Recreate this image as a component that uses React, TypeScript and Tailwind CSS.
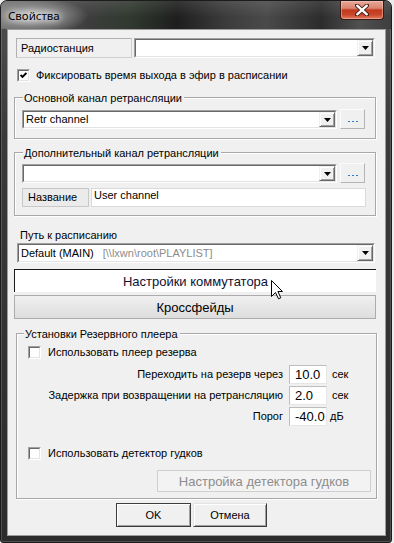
import React from "react";

function DropBtn() {
  return (
    <div className="w-[16px] h-full shrink-0 flex items-center justify-center bg-[#f0f0f0] border border-t-[#f0f0f0] border-l-[#f0f0f0] border-r-[#696969] border-b-[#696969] shadow-[inset_1px_1px_0_#fff,inset_-1px_-1px_0_#a0a0a0]">
      <svg width="7" height="4" viewBox="0 0 7 4">
        <path d="M0 0H7L3.5 4Z" fill="#000" />
      </svg>
    </div>
  );
}

function Combo({ className, children }: { className: string; children?: React.ReactNode }) {
  return (
    <div className={"flex bg-white border border-t-[#a0a0a0] border-l-[#a0a0a0] border-r-white border-b-white " + className}>
      <div className="flex-1 min-w-0 flex border border-t-[#696969] border-l-[#696969] border-r-[#e3e3e3] border-b-[#e3e3e3]">
        <div className="flex-1 min-w-0 flex items-center pl-[2px] whitespace-nowrap overflow-hidden">{children}</div>
        <DropBtn />
      </div>
    </div>
  );
}

function DotsBtn() {
  return (
    <div className="w-[25px] h-[20px] ml-[3px] shrink-0 flex items-end justify-center gap-[2px] pb-[6px] bg-[#f0f0f0] border border-t-[#fbfbfb] border-l-[#fbfbfb] border-r-[#b4b4b4] border-b-[#b4b4b4]">
      <div className="w-[2px] h-[1px] bg-[#2f78d8]" />
      <div className="w-[2px] h-[1px] bg-[#2f78d8]" />
      <div className="w-[2px] h-[1px] bg-[#2f78d8]" />
    </div>
  );
}

function Check({ checked }: { checked?: boolean }) {
  return (
    <div className="w-[13px] h-[13px] shrink-0 bg-white border border-t-[#a0a0a0] border-l-[#a0a0a0] border-r-white border-b-white">
      <div className="w-full h-full border border-t-[#696969] border-l-[#696969] border-r-[#e3e3e3] border-b-[#e3e3e3] flex items-center justify-center">
        {checked && (
          <svg width="7" height="7" viewBox="0 0 7 7">
            <polyline points="0.6,3 2.5,5 6.4,1" fill="none" stroke="#000" strokeWidth="1.9" />
          </svg>
        )}
      </div>
    </div>
  );
}

function Group({
  title,
  className,
  labelClass,
  children,
}: {
  title: string;
  className: string;
  labelClass: string;
  children?: React.ReactNode;
}) {
  return (
    <div className={"relative border border-[#a8a8a8] shadow-[inset_1px_1px_0_#fff,1px_1px_0_#fff] " + className}>
      <span className={"absolute top-[-6px] bg-[#f0f0f0] pl-[1px] pr-[2px] whitespace-nowrap " + labelClass}>{title}</span>
      {children}
    </div>
  );
}

function ValueRow({ label, value, unit, unitClass, className }: { label: string; value: string; unit: string; unitClass: string; className: string }) {
  return (
    <div className={"flex items-center h-[19px] " + className}>
      <div className="w-[255px] text-right whitespace-nowrap">{label}</div>
      <div className="ml-[6px] w-[38px] h-[19px] bg-white border border-t-[#bdbdbd] border-l-[#bdbdbd] border-r-[#e6e6e6] border-b-[#e6e6e6] flex items-center pl-[5px] text-[13px] leading-[15px]">
        {value}
      </div>
      <div className={unitClass}>{unit}</div>
    </div>
  );
}

function CloseBtn() {
  return (
    <div className="mr-[7px] w-[44px] h-[19px] rounded-b-[4px] border border-t-0 border-[#3a1a14] bg-[linear-gradient(180deg,#e9a898_0%,#d98570_40%,#c2391e_50%,#c9452a_75%,#e27a5c_100%)] shadow-[inset_0_0_0_1px_rgba(255,210,200,0.45)] flex items-center justify-center">
      <svg width="14" height="12" viewBox="0 0 14 12">
        <path d="M2 1.5L12 10.5M12 1.5L2 10.5" stroke="#4a1f18" strokeWidth="4.2" strokeLinecap="round" />
        <path d="M2.2 1.7L11.8 10.3M11.8 1.7L2.2 10.3" stroke="#fff" strokeWidth="2.4" strokeLinecap="round" />
      </svg>
    </div>
  );
}

function Cursor() {
  return (
    <svg className="absolute left-[271px] top-[280px]" width="13" height="20" viewBox="0 0 13 20">
      <path d="M0.5 0.5V16.5L4.5 12.5L7.5 18.8L9.8 17.8L6.9 11.5H11.5Z" fill="#fff" stroke="#000" strokeWidth="1" strokeLinejoin="miter" />
    </svg>
  );
}

export default function App() {
  return (
    <div className="w-[394px] h-[543px] bg-[#ececec] relative overflow-hidden font-['Liberation_Sans',Arial,sans-serif] text-black">
      <div className="w-[392px] h-[543px] rounded-t-[7px] rounded-b-[3px] border border-[#1c1c1c] bg-[linear-gradient(180deg,#505050_0%,#3a3a3a_25%,#2c2c2c_100%)] shadow-[inset_0_0_0_1px_rgba(255,255,255,0.16)] flex flex-col">
        {/* Title bar */}
        <div className="h-[28px] shrink-0 flex justify-between rounded-t-[6px] bg-[radial-gradient(ellipse_55px_18px_at_33px_15px,rgba(225,225,225,0.85),rgba(170,170,170,0.45)_60%,transparent_100%),linear-gradient(180deg,rgba(255,255,255,0.10),transparent_60%),linear-gradient(90deg,#6e6e6e_0%,#555_10%,#3d3d3d_22%,#30392f_33%,#1e1e1e_45%,#3c3c3c_58%,#4a4a4a_68%,#2c2c2c_82%,#505050_92%,#3e3e3e_100%)]">
          <div className="pl-[7px] pt-[7px] text-[11.5px] leading-[16px] font-['Noto_Sans',Arial,sans-serif] text-black [text-shadow:0_0_6px_rgba(255,255,255,0.9),0_0_10px_rgba(255,255,255,0.7)]">
            Свойства
          </div>
          <CloseBtn />
        </div>

        {/* Client */}
        <div className="ml-[6px] w-[379px] h-[507px] border border-[#9c9c9c] bg-[#f0f0f0] flex flex-col text-[11px] leading-[13px]">
          {/* Радиостанция */}
          <div className="mt-[8px] ml-[8px] flex h-[20px]">
            <div className="w-[116px] h-full border border-[#b0b0b0] border-r-[#d0d0d0] border-b-[#d0d0d0] flex items-center pl-[4px]">Радиостанция</div>
            <Combo className="ml-[2px] w-[241px] h-full" />
          </div>

          {/* checkbox */}
          <div className="mt-[11px] ml-[9px] flex items-center h-[13px] gap-[6px]">
            <Check checked />
            <span className="whitespace-nowrap">Фиксировать время выхода в эфир в расписании</span>
          </div>

          {/* Group 1 */}
          <Group title="Основной канал ретрансляции" className="mt-[15px] ml-[6px] w-[362px] h-[42px] pt-[11px] pl-[7px]" labelClass="left-[8px]">
            <div className="flex items-start">
              <Combo className="mt-[1px] w-[315px] h-[19px]">Retr channel</Combo>
              <DotsBtn />
            </div>
          </Group>

          {/* Group 2 */}
          <Group title="Дополнительный канал ретрансляции" className="mt-[13px] ml-[6px] w-[362px] h-[64px] pt-[10px] pl-[7px]" labelClass="left-[8px]">
            <div className="flex items-start">
              <Combo className="mt-[1px] w-[315px] h-[19px]" />
              <DotsBtn />
            </div>
            <div className="mt-[5px] flex h-[19px]">
              <div className="w-[67px] h-full bg-[#ebebeb] border border-[#c8c8c8] flex items-center pl-[5px]">Название</div>
              <div className="ml-[2px] w-[275px] h-full bg-white border border-[#dadada] pl-[2px]">User channel</div>
            </div>
          </Group>

          {/* Path */}
          <div className="mt-[13px] ml-[12px] whitespace-nowrap">Путь к расписанию</div>
          <Combo className="mt-[1px] ml-[9px] w-[358px] h-[20px]">
            <span>Default (MAIN)</span>
            <span className="ml-[9px] text-[#8c8c8c]">[\\lxwn\root\PLAYLIST]</span>
          </Combo>

          {/* Buttons */}
          <div className="mt-[6px] ml-[6px] w-[362px] h-[23px] bg-white border-t border-l border-[#1a1a1a] flex items-center justify-center text-[13px] leading-[15px] text-[#101030]">
            Настройки коммутатора
          </div>
          <div className="mt-[3px] ml-[6px] w-[362px] h-[24px] bg-[linear-gradient(180deg,#f0f0f0_0%,#e6e6e6_50%,#dedede_100%)] border border-[#acacac] flex items-center justify-center text-[13px] leading-[15px]">
            Кроссфейды
          </div>

          {/* Group 3 */}
          <Group title="Установки Резервного плеера" className="mt-[14px] ml-[8px] w-[361px] h-[166px] pt-[12px] pl-[11px]" labelClass="left-[7px]">
            <div className="flex items-center h-[13px] gap-[7px]">
              <Check />
              <span className="whitespace-nowrap">Использовать плеер резерва</span>
            </div>
            <ValueRow className="mt-[6px]" label="Переходить на резерв через" value="10.0" unit="сек" unitClass="ml-[5px]" />
            <ValueRow className="mt-[2px]" label="Задержка при возвращении на ретрансляцию" value="2.0" unit="сек" unitClass="ml-[5px]" />
            <ValueRow className="mt-[2px]" label="Порог" value="-40.0" unit="дБ" unitClass="ml-[3px]" />
            <div className="mt-[21px] flex items-center h-[13px] gap-[7px]">
              <Check />
              <span className="whitespace-nowrap">Использовать детектор гудков</span>
            </div>
            <div className="mt-[10px] ml-[129px] w-[214px] h-[22px] bg-[#f3f3f3] border border-[#cfcfcf] flex items-center justify-center text-[13px] leading-[15px] text-[#8d8d8d]">
              Настройка детектора гудков
            </div>
          </Group>

          {/* OK / Cancel */}
          <div className="mt-[4px] ml-[108px] flex gap-[2px]">
            <div className="w-[75px] h-[24px] bg-[#f0f0f0] border border-[#3c3c3c] shadow-[inset_1px_1px_0_#fff,inset_-1px_-1px_0_#a0a0a0] flex items-center justify-center">OK</div>
            <div className="w-[74px] h-[24px] bg-[#f0f0f0] border border-t-[#e3e3e3] border-l-[#e3e3e3] border-r-[#3c3c3c] border-b-[#3c3c3c] shadow-[inset_1px_1px_0_#fff,inset_-1px_-1px_0_#a0a0a0] flex items-center justify-center">Отмена</div>
          </div>
        </div>
      </div>
      <Cursor />
    </div>
  );
}
